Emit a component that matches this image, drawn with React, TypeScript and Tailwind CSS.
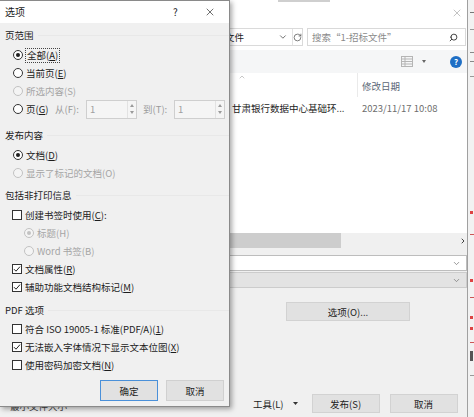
import { ChevronDown, ChevronUp, ChevronRight, RotateCw, Search, X } from "lucide-react";
import clsx from "clsx";

function Key({ k }: { k: string }) {
  return <span className="underline underline-offset-[1px]">{k}</span>;
}

function Radio({ on, disabled }: { on?: boolean; disabled?: boolean }) {
  return (
    <span
      className={clsx(
        "flex h-[10px] w-[10px] shrink-0 items-center justify-center rounded-full border",
        disabled ? "border-[#c2c2c2] bg-[#f4f4f4]" : "border-[#333] bg-white"
      )}
    >
      {on && <span className={clsx("h-[4px] w-[4px] rounded-full", disabled ? "bg-[#c2c2c2]" : "bg-[#1f1f1f]")} />}
    </span>
  );
}

function Check({ on }: { on?: boolean }) {
  return (
    <span className="flex h-[10px] w-[10px] shrink-0 items-center justify-center border border-[#333] bg-white">
      {on && (
        <svg width="8" height="8" viewBox="0 0 8 8">
          <path d="M1 4.2 L3 6.2 L7 1.6" fill="none" stroke="#222" strokeWidth="1" />
        </svg>
      )}
    </span>
  );
}

function Heading({ text }: { text: string }) {
  return (
    <div className="flex h-[18px] items-center pl-[5px]">
      <span>{text}</span>
      <span className="ml-[4px] h-px flex-1 bg-[#e8e8e8]" />
    </div>
  );
}

function Spin() {
  return (
    <div className="flex h-[19px] w-[51px] shrink-0 items-center border border-[#cfcfcf] bg-[#f5f5f5] pl-[3px]">
      <span className="flex-1 text-[#a0a0a0]">1</span>
      <div className="flex h-full w-[9px] flex-col items-center justify-center gap-[4px] border-l border-[#e2e2e2]">
        <svg width="4" height="3" viewBox="0 0 4 3">
          <path d="M0 3 L2 0 L4 3 Z" fill="#9a9a9a" />
        </svg>
        <svg width="4" height="3" viewBox="0 0 4 3">
          <path d="M0 0 L2 3 L4 0 Z" fill="#9a9a9a" />
        </svg>
      </div>
    </div>
  );
}

function Btn({ children, focus, w }: { children: React.ReactNode; focus?: boolean; w: string }) {
  return (
    <div
      className={clsx(
        "flex h-[21px] items-center justify-center border bg-[#e1e1e1]",
        w,
        focus ? "border-[#4a90d9]" : "border-[#d0d0d0]"
      )}
    >
      {children}
    </div>
  );
}

function OptionsDialog() {
  const row = "flex h-[18px] items-center";
  return (
    <div className="absolute left-0 top-0 flex h-[407px] w-[230px] flex-col border-r border-b border-t border-[#8a8a8a] bg-[#f0f0f0] text-[#1c1c1c] shadow-[2px_2px_5px_rgba(0,0,0,0.35)]">
      <div className="flex h-[22px] items-center bg-white pl-[5px]">
        <span className="text-[10px]">选项</span>
        <span className="ml-[148px] text-[10px]">?</span>
        <X size={12} strokeWidth={1.3} className="ml-[26px] text-[#222]" />
      </div>

      <div className="flex flex-col pt-[3px]">
        <Heading text="页范围" />
        <div className="mt-[2px] flex flex-col">
          <div className={clsx(row, "gap-[2px] pl-[13px]")}>
            <Radio on />
            <span className="border border-dotted border-[#444] px-[1px] leading-[13px]">
              全部(<Key k="A" />)
            </span>
          </div>
          <div className={clsx(row, "gap-[3px] pl-[13px]")}>
            <Radio />
            <span>
              当前页(<Key k="E" />)
            </span>
          </div>
          <div className={clsx(row, "gap-[3px] pl-[13px] text-[#a5a5a5]")}>
            <Radio disabled />
            <span>所选内容(S)</span>
          </div>
          <div className={clsx(row, "pl-[13px]")}>
            <Radio />
            <span className="ml-[3px] w-[29px]">
              页(<Key k="G" />)
            </span>
            <span className="w-[31px] text-[#9a9a9a]">从(F):</span>
            <Spin />
            <span className="ml-[6px] w-[31px] text-[#9a9a9a]">到(T):</span>
            <Spin />
          </div>
        </div>

        <div className="mt-[8px]">
          <Heading text="发布内容" />
        </div>
        <div className="mt-[2px] flex flex-col">
          <div className={clsx(row, "gap-[3px] pl-[13px]")}>
            <Radio on />
            <span>
              文档(<Key k="D" />)
            </span>
          </div>
          <div className={clsx(row, "gap-[3px] pl-[13px] text-[#a5a5a5]")}>
            <Radio disabled />
            <span>显示了标记的文档(O)</span>
          </div>
        </div>

        <div className="mt-[4px]">
          <Heading text="包括非打印信息" />
        </div>
        <div className="mt-[2px] flex flex-col">
          <div className={clsx(row, "gap-[3px] pl-[12px]")}>
            <Check />
            <span>
              创建书签时使用(<Key k="C" />):
            </span>
          </div>
          <div className={clsx(row, "gap-[3px] pl-[24px] text-[#a5a5a5]")}>
            <Radio on disabled />
            <span>标题(H)</span>
          </div>
          <div className={clsx(row, "gap-[3px] pl-[24px] text-[#a5a5a5]")}>
            <Radio disabled />
            <span>Word 书签(B)</span>
          </div>
          <div className={clsx(row, "gap-[3px] pl-[12px]")}>
            <Check on />
            <span>
              文档属性(<Key k="R" />)
            </span>
          </div>
          <div className={clsx(row, "gap-[3px] pl-[12px]")}>
            <Check on />
            <span>
              辅助功能文档结构标记(<Key k="M" />)
            </span>
          </div>
        </div>

        <div className="mt-[5px]">
          <Heading text="PDF 选项" />
        </div>
        <div className="mt-[1px] flex flex-col">
          <div className={clsx(row, "gap-[3px] pl-[12px]")}>
            <Check />
            <span>
              符合 ISO 19005-1 标准(PDF/A)(<Key k="1" />)
            </span>
          </div>
          <div className={clsx(row, "gap-[3px] pl-[12px]")}>
            <Check on />
            <span>
              无法嵌入字体情况下显示文本位图(<Key k="X" />)
            </span>
          </div>
          <div className={clsx(row, "gap-[3px] pl-[12px]")}>
            <Check />
            <span>
              使用密码加密文档(<Key k="N" />)
            </span>
          </div>
        </div>

        <div className="mt-[6px] flex gap-[8px] pl-[100px]">
          <Btn focus w="w-[58px]">确定</Btn>
          <Btn w="w-[58px]">取消</Btn>
        </div>
      </div>
    </div>
  );
}

function PublishDialog() {
  return (
    <div className="flex w-[468px] shrink-0 flex-col border-r border-[#a0a0a0] bg-[#f0f0f0] text-[#1c1c1c]">
      <div className="flex h-[24px] flex-col bg-white">
        <div className="ml-[278px] h-[2px] w-[52px] bg-[#cfcfcf]" />
        <div className="flex flex-1 items-center justify-end pr-[4px]">
          <X size={12} strokeWidth={1.2} className="text-[#9a9a9a]" />
        </div>
      </div>

      <div className="flex h-[26px] items-center bg-white">
        <div className="flex h-[18px] w-[303px] items-center border border-[#dadada] pl-[205px]">
          <span className="w-[39px]">招标文件</span>
          <ChevronDown size={10} className="ml-[34px] text-[#555]" />
          <div className="ml-[4px] flex h-full flex-1 items-center justify-center border-l border-[#e2e2e2]">
            <RotateCw size={9} className="text-[#555]" />
          </div>
        </div>
        <div className="ml-[4px] flex h-[18px] w-[159px] items-center border border-[#d9d9d9] pl-[4px] text-[#8a8a8a]">
          <span className="flex-1">搜索“1-招标文件”</span>
          <Search size={9} strokeWidth={2.4} className="mr-[7px] -scale-x-100 text-[#333]" />
        </div>
      </div>

      <div className="flex h-[23px] items-center bg-[#f5f6f7] pl-[401px]">
        <svg width="12" height="11" viewBox="0 0 12 11">
          <rect x="0.5" y="0.5" width="11" height="10" fill="none" stroke="#b5b5b5" />
          <path d="M4 0.5 V10.5 M0.5 3 H11.5 M0.5 5.5 H11.5 M0.5 8 H11.5" stroke="#b5b5b5" />
        </svg>
        <svg width="4" height="3" viewBox="0 0 4 3" className="ml-[9px]">
          <path d="M0 0 L2 3 L4 0 Z" fill="#666" />
        </svg>
        <div className="ml-[24px] flex h-[12px] w-[12px] items-center justify-center rounded-full bg-[#1f6fc5] text-[8px] font-bold leading-none text-white">
          ?
        </div>
      </div>

      <div className="flex h-[160px] flex-col bg-white">
        <div className="flex h-[24px] pl-[229px]">
          <div className="w-[128px] pl-[9px]">
            <ChevronUp size={8} className="text-[#aaa]" />
          </div>
          <div className="w-px bg-[#eaeaea]" />
          <div className="flex items-center pl-[4px] pt-[1px] text-[#5b6676]">修改日期</div>
        </div>
        <div className="flex h-[22px] items-center pl-[229px]">
          <span className="w-[129px] pl-[3px]">甘肃银行数据中心基础环...</span>
          <span className="pl-[4px] text-[#6d6d6d]">2023/11/17 10:08</span>
        </div>
      </div>

      <div className="flex h-[15px] items-center bg-[#f0f0f0]">
        <div className="h-full w-[341px] bg-[#cdcdcd]" />
        <ChevronRight size={8} strokeWidth={3} className="ml-[118px] text-[#444]" />
      </div>

      <div className="mt-[7px] flex h-[16px] items-center justify-end border border-[#bdbdbd] bg-white pr-[5px]">
        <ChevronDown size={9} className="text-[#777]" />
      </div>
      <div className="mt-px flex h-[16px] items-center justify-end border border-[#cccccc] bg-[#e3e3e3] pr-[5px]">
        <ChevronDown size={9} className="text-[#777]" />
      </div>

      <div className="mt-[14px] flex justify-center pl-[229px]">
        <div className="flex h-[19px] w-[124px] items-center justify-center border border-[#d2d2d2] bg-[#e1e1e1]">
          选项(O)...
        </div>
      </div>

      <div className="mt-[73px] flex h-[19px] items-center pl-[10px]">
        <span className="mt-[6px] w-[243px] self-start text-[#444]">最小文件大小</span>
        <span>工具(L)</span>
        <svg width="5" height="3" viewBox="0 0 5 3" className="ml-[9px]">
          <path d="M0 0 L2.5 3 L5 0 Z" fill="#333" />
        </svg>
        <div className="ml-[14px] flex h-full w-[68px] items-center justify-center border border-[#d2d2d2] bg-[#e1e1e1]">
          发布(S)
        </div>
        <div className="ml-[10px] flex h-full w-[68px] items-center justify-center border border-[#d2d2d2] bg-[#e1e1e1]">
          取消
        </div>
      </div>
    </div>
  );
}

function DocStrip() {
  return (
    <div className="flex flex-1 flex-col bg-[#f2f2f2] pl-[2px]">
      <div className="mt-[12px] h-px w-[4px] bg-[#777]" />
      <div className="mt-[16px] h-px w-[4px] bg-[#999]" />
      <div className="mt-[22px] h-px w-[4px] bg-[#888]" />
      <div className="mt-[8px] h-px w-[4px] bg-[#888]" />
      <div className="mt-[14px] h-px w-[4px] bg-[#999]" />
      <div className="mt-[134px] h-[3px] w-[3px] bg-[#d44]" />
      <div className="mt-[20px] h-px w-[4px] bg-[#c55]" />
      <div className="mt-[44px] h-[3px] w-[3px] bg-[#d44]" />
      <div className="mt-[15px] h-px w-[4px] bg-[#c55]" />
      <div className="mt-[18px] h-[3px] w-[3px] bg-[#d44]" />
      <div className="mt-[8px] h-[3px] w-[3px] bg-[#d44]" />
      <div className="mt-[12px] h-px w-[4px] bg-[#c55]" />
      <div className="mt-[8px] h-[10px] w-[3px] bg-[#555]" />
      <div className="mt-[14px] h-px w-[4px] bg-[#999]" />
    </div>
  );
}

export default function App() {
  return (
    <div className="relative h-[417px] w-[474px] overflow-hidden font-['Noto_Sans_CJK_SC',sans-serif] text-[9.5px] leading-[12px]">
      <div className="flex h-full">
        <PublishDialog />
        <DocStrip />
      </div>
      <OptionsDialog />
    </div>
  );
}
